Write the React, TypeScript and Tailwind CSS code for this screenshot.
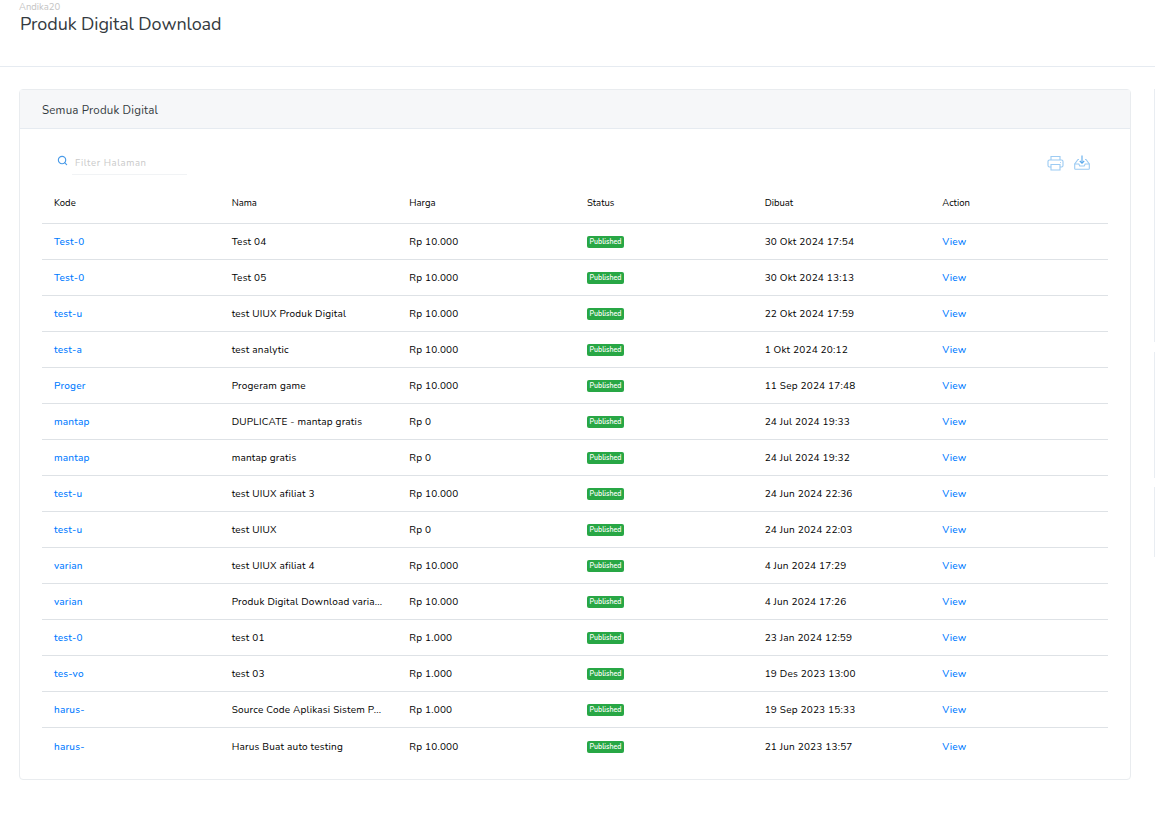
import {Search} from "lucide-react";

type Row = {
    kode: string;
    nama: string;
    harga: string;
    dibuat: string;
};

const rows: Row[] = [
    {kode: "Test-0", nama: "Test 04", harga: "Rp 10.000", dibuat: "30 Okt 2024 17:54"},
    {kode: "Test-0", nama: "Test 05", harga: "Rp 10.000", dibuat: "30 Okt 2024 13:13"},
    {kode: "test-u", nama: "test UIUX Produk Digital", harga: "Rp 10.000", dibuat: "22 Okt 2024 17:59"},
    {kode: "test-a", nama: "test analytic", harga: "Rp 10.000", dibuat: "1 Okt 2024 20:12"},
    {kode: "Proger", nama: "Progeram game", harga: "Rp 10.000", dibuat: "11 Sep 2024 17:48"},
    {kode: "mantap", nama: "DUPLICATE - mantap gratis", harga: "Rp 0", dibuat: "24 Jul 2024 19:33"},
    {kode: "mantap", nama: "mantap gratis", harga: "Rp 0", dibuat: "24 Jul 2024 19:32"},
    {kode: "test-u", nama: "test UIUX afiliat 3", harga: "Rp 10.000", dibuat: "24 Jun 2024 22:36"},
    {kode: "test-u", nama: "test UIUX", harga: "Rp 0", dibuat: "24 Jun 2024 22:03"},
    {kode: "varian", nama: "test UIUX afiliat 4", harga: "Rp 10.000", dibuat: "4 Jun 2024 17:29"},
    {kode: "varian", nama: "Produk Digital Download varia...", harga: "Rp 10.000", dibuat: "4 Jun 2024 17:26"},
    {kode: "test-0", nama: "test 01", harga: "Rp 1.000", dibuat: "23 Jan 2024 12:59"},
    {kode: "tes-vo", nama: "test 03", harga: "Rp 1.000", dibuat: "19 Des 2023 13:00"},
    {kode: "harus-", nama: "Source Code Aplikasi Sistem P...", harga: "Rp 1.000", dibuat: "19 Sep 2023 15:33"},
    {kode: "harus-", nama: "Harus Buat auto testing", harga: "Rp 10.000", dibuat: "21 Jun 2023 13:57"},
];

const headers = ["Kode", "Nama", "Harga", "Status", "Dibuat", "Action"];

function PrintIcon() {
    return (
        <svg width="17" height="16" viewBox="0 0 17 16" fill="none" stroke="#9ccbf3" strokeWidth="1.1">
            <path d="M4 5V1.5h9V5"/>
            <path d="M4 12H2.5A1.5 1.5 0 0 1 1 10.5v-4A1.5 1.5 0 0 1 2.500 5h12A1.500 1.500 0 0 1 16 6.500v4a1.500 1.500 0 0 1-1.500 1.500H13"/>
            <path d="M4 9.500h9v5.500H4z"/>
            <path d="M13 7.500h.8"/>
        </svg>
    );
}

function InboxIcon() {
    return (
        <svg width="16" height="15" viewBox="0 0 16 15" fill="none" stroke="#9ccbf3" strokeWidth="1.1">
            <path d="M5 4.500H4L.7 9v4.500a.8.8 0 0 0 .8.800h13a.8.800 0 0 0 .8-.800V9L12 4.500h-1"/>
            <path d="M.7 9h4.100l1 2h4.400l1-2h4.100"/>
            <path d="M8 .5v7.500" stroke="#5aa9ec"/>
            <path d="M5.800 6 8 8.200 10.200 6" stroke="#5aa9ec"/>
        </svg>
    );
}

export default function App() {
    return (
        <div className="w-[1155px] h-[817px] overflow-hidden bg-white font-['Nunito','Lato',sans-serif] text-[10px] tracking-[0.2px] text-black">
            <div className="h-[67px] border-b border-[#e6ebf1] pl-[19px]">
                <p className="pt-[2px] text-[9.5px] leading-[10px] tracking-normal text-[#c4c4c4]">Andika20</p>
                <h1 className="ml-px text-[18px] leading-6 tracking-[-0.1px] text-[#343a40]">Produk Digital Download</h1>
            </div>

            <div className="flex pt-[22px] pl-[19px]">
                <div className="w-[1112px] h-[691px] shrink-0 rounded-sm border border-[#e9ecef]">
                    <div className="h-[39px] border-b border-[#e6ebf1] bg-[#f6f7f9] pl-[22px] text-[11.5px] leading-[40px] tracking-[0.2px] text-[#343a40]">
                        Semua Produk Digital
                    </div>

                    <div className="px-[22px]">
                        <div className="flex h-[47px] items-end justify-between">
                            <div className="mb-px flex items-start">
                                <Search size={11} strokeWidth={2.5} className="ml-[15px] text-[#4a9be8]"/>
                                <div className="ml-[4px] h-[20px] w-[115px] border-b border-[#f1f3f5] pl-[3px] text-[9.5px] leading-[15px] tracking-[0.6px] text-[#c9c9c9]">
                                    Filter Halaman
                                </div>
                            </div>
                            <div className="mr-[18px] mb-[5px] flex items-end gap-[10px]">
                                <PrintIcon/>
                                <div className="mb-px">
                                    <InboxIcon/>
                                </div>
                            </div>
                        </div>

                        <table className="w-[1066px] table-fixed border-collapse">
                            <thead>
                                <tr className="h-[47px] border-b border-[#dee2e6]">
                                    {headers.map((header) => (
                                        <th key={header} className="pl-3 pt-2 text-left text-[9.5px] font-normal tracking-normal">{header}</th>
                                    ))}
                                </tr>
                            </thead>
                            <tbody>
                                {rows.map((row, idx) => (
                                    <tr key={idx} className={idx < rows.length - 1 ? "h-9 border-b border-[#dee2e6]" : "h-[38px]"}>
                                        <td className="pl-3 pt-0.5 font-medium text-[#007bff]">{row.kode}</td>
                                        <td className="pl-3 pt-0.5">{row.nama}</td>
                                        <td className="pl-3 pt-0.5">{row.harga}</td>
                                        <td className="pl-3">
                                            <span className="inline-block h-3 w-[37px] rounded-[2px] bg-[#28a745] text-center text-[7px] leading-3 font-semibold tracking-normal text-white">
                                                Published
                                            </span>
                                        </td>
                                        <td className="pl-3 pt-0.5">{row.dibuat}</td>
                                        <td className="pl-3 pt-0.5 font-medium text-[#007bff]">View</td>
                                    </tr>
                                ))}
                            </tbody>
                        </table>
                    </div>
                </div>

                <div className="ml-[23px] flex w-px shrink-0 flex-col">
                    <div className="h-[253px] bg-[#e9edf2]"/>
                    <div className="mt-[10px] h-[126px] bg-[#e9edf2]"/>
                    <div className="mt-[9px] h-[70px] bg-[#e9edf2]"/>
                </div>
            </div>
        </div>
    );
}
